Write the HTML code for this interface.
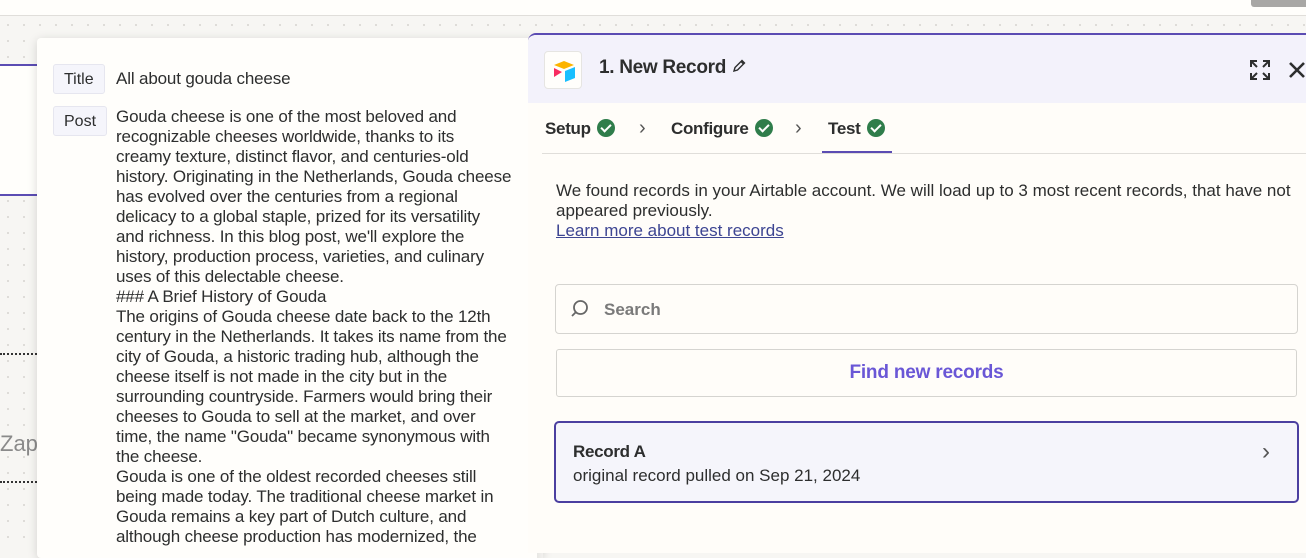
<!DOCTYPE html>
<html><head><meta charset="utf-8"><style>
*{box-sizing:border-box;margin:0;padding:0}
body{width:1306px;height:548px;overflow:hidden;position:relative;background:#f7f6f3;font-family:"Liberation Sans",sans-serif;color:#2d2e2e}
.top{position:absolute;left:0;top:0;width:1306px;height:16px;background:#fffefb;border-bottom:1px solid #e0deda}
.topbtn{position:absolute;left:1251px;top:-4px;width:60px;height:11px;background:#a8a7a5;border-radius:3px}
.canvas{position:absolute;left:0;top:17px;width:1306px;height:531px;background-image:radial-gradient(#dcdad6 1px,transparent 1.2px);background-size:16px 16px}
.node{position:absolute;left:-10px;top:64px;width:60px;height:132px;border:2px solid #5b4cb3;border-radius:6px;background:#fffefb}
.dots{position:absolute;left:0;width:40px;border-top:2px dotted #333}
.zap{position:absolute;left:0;top:431px;font-size:22px;color:#8a8a8a}
.pop{position:absolute;left:37px;top:38px;width:506px;height:520px;background:#fffefb;border-radius:4px;box-shadow:0 2px 10px rgba(0,0,0,.15)}
.pop:after{content:"";position:absolute;right:0;top:0;width:6px;height:100%;background:linear-gradient(90deg,#e8e7e4,#f2f1ee)}
.lab{position:absolute;left:16px;height:30px;padding:0 10px;line-height:30px;background:#f5f5fb;border:1px solid #e6e6ef;border-radius:3px;font-size:16px;color:#2d2e2e}
.txt{position:absolute;left:79px;font-size:17px;line-height:20px;white-space:nowrap;color:#2d2e2e;letter-spacing:-.15px}
.panel{position:absolute;left:528px;top:33px;width:790px;height:520px;background:#fffdf9;border-top:2px solid #5b4cb3;border-radius:8px 0 0 0}
.hdr{position:absolute;left:0;top:0;width:790px;height:68px;background:#f3f2fb;border-radius:8px 0 0 0}
.logo{position:absolute;left:16px;top:16px;width:38px;height:38px;background:#fffefb;border:1px solid #e6e5e2;border-radius:4px}
.ttl{position:absolute;left:71px;top:22px;font-size:19px;font-weight:bold;letter-spacing:-.3px;color:#2d2e2e}
.cond{font-size:17px}
.tab{position:absolute;top:84px;font-size:17px;font-weight:bold;letter-spacing:-.3px}
.ck{display:inline-block;width:18px;height:18px;border-radius:50%;background:#2f7d4b;vertical-align:-3px;margin-left:6px;position:relative}
.ck:after{content:"";position:absolute;left:6px;top:3px;width:4px;height:8px;border:solid #fff;border-width:0 2px 2px 0;transform:rotate(45deg)}
.chev{position:absolute;top:82px;font-size:20px;color:#555}
</style></head><body>
<div class="top"><div class="topbtn"></div></div>
<div class="canvas"></div>
<div class="node"></div>
<div class="dots" style="top:353px"></div>
<div class="dots" style="top:481px"></div>
<div class="zap">Zap</div>

<div class="pop">
<div class="lab" style="top:26px">Title</div>
<div class="txt" style="top:31px">All about gouda cheese</div>
<div class="lab" style="top:68px">Post</div>
<div class="txt" style="top:69px">Gouda cheese is one of the most beloved and<br>recognizable cheeses worldwide, thanks to its<br>creamy texture, distinct flavor, and centuries-old<br>history. Originating in the Netherlands, Gouda cheese<br>has evolved over the centuries from a regional<br>delicacy to a global staple, prized for its versatility<br>and richness. In this blog post, we'll explore the<br>history, production process, varieties, and culinary<br>uses of this delectable cheese.<br>### A Brief History of Gouda<br>The origins of Gouda cheese date back to the 12th<br>century in the Netherlands. It takes its name from the<br>city of Gouda, a historic trading hub, although the<br>cheese itself is not made in the city but in the<br>surrounding countryside. Farmers would bring their<br>cheeses to Gouda to sell at the market, and over<br>time, the name "Gouda" became synonymous with<br>the cheese.<br>Gouda is one of the oldest recorded cheeses still<br>being made today. The traditional cheese market in<br>Gouda remains a key part of Dutch culture, and<br>although cheese production has modernized, the</div>
</div>

<div class="panel">
<div class="hdr"></div>
<div class="logo"><svg width="38" height="38" viewBox="0 0 38 38"><path d="M19 9 L29 13 L19 17 L9 13Z" fill="#fcb400"/><path d="M20 19 L30 15 L30 26 L20 30Z" fill="#18bfff"/><path d="M9 16 L17 20 L9 25Z" fill="#f82b60"/></svg></div>
<div class="ttl">1. New Record <svg width="16" height="16" viewBox="0 0 16 16" style="vertical-align:-1px"><path d="M3 13 L4 9.5 L11 2.5 L13.5 5 L6.5 12 Z M10 3.5 L12.5 6" fill="none" stroke="#2d2e2e" stroke-width="1.4"/></svg></div>
<svg style="position:absolute;left:721px;top:24px" width="22" height="22" viewBox="0 0 22 22" fill="none" stroke="#2d2e2e" stroke-width="2"><path d="M2 8V2h6M2 2l6 6M14 2h6v6M20 2l-6 6M2 14v6h6M2 20l6-6M20 14v6h-6M20 20l-6-6"/></svg>
<svg style="position:absolute;left:760px;top:26px" width="18" height="18" viewBox="0 0 18 18" stroke="#2d2e2e" stroke-width="2.6"><path d="M2 2L16 16M16 2L2 16"/></svg>

<div class="tab" style="left:17px">Setup<span class="ck"></span></div>
<div class="chev" style="left:111px">&#x203A;</div>
<div class="tab" style="left:143px">Configure<span class="ck"></span></div>
<div class="chev" style="left:267px">&#x203A;</div>
<div class="tab" style="left:300px">Test<span class="ck"></span></div>
<div style="position:absolute;left:294px;top:116px;width:70px;height:3px;background:#5b4cb3"></div>
<div style="position:absolute;left:14px;top:118px;width:780px;height:1px;background:#e0deda"></div>

<div class="cond" style="position:absolute;left:28px;top:146px;line-height:20px;white-space:nowrap">We found records in your Airtable account. We will load up to 3 most recent records, that have not<br>appeared previously.<br><span style="color:#3d4592;text-decoration:underline">Learn more about test records</span></div>

<div style="position:absolute;left:27px;top:249px;width:743px;height:50px;border:1px solid #d5d4d0;border-radius:4px;background:#fffdf9"></div>
<svg style="position:absolute;left:40px;top:263px" width="22" height="22" viewBox="0 0 22 22" fill="none" stroke="#666" stroke-width="1.8"><circle cx="12.5" cy="9.5" r="6.5"/><path d="M7.5 14.5L4 18"/></svg>
<div class="cond" style="position:absolute;left:76px;top:265px;color:#7a7a7a;font-weight:bold">Search</div>

<div style="position:absolute;left:28px;top:314px;width:741px;height:48px;border:1px solid #d5d4d0;border-radius:3px;text-align:center;line-height:46px;font-size:19px;font-weight:bold;color:#6a57d6;letter-spacing:-.2px">Find new records</div>

<div style="position:absolute;left:26px;top:386px;width:745px;height:82px;border:2px solid #4b3fa0;border-radius:5px;background:#f5f5fb"></div>
<div style="position:absolute;left:45px;top:407px;font-size:17px;font-weight:bold;letter-spacing:-.3px">Record A</div>
<div class="cond" style="position:absolute;left:45px;top:431px">original record pulled on Sep 21, 2024</div>
<div style="position:absolute;left:734px;top:403px;font-size:24px;color:#555">&#x203A;</div>
</div>
</body></html>
